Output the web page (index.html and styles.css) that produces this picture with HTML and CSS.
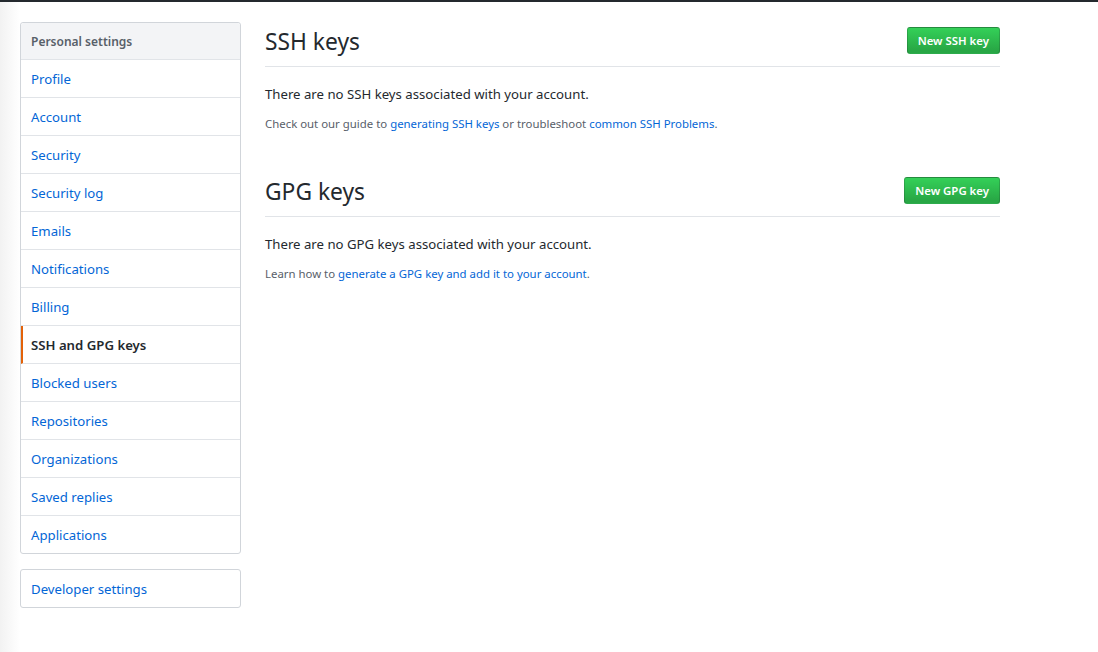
FILE: index.html
```html
<!DOCTYPE html>
<html>
<head>
<meta charset="utf-8">
<link rel="stylesheet" href="styles.css">
</head>
<body>
<div class="topbar"></div>
<div class="page">
  <aside class="sidebar">
    <nav class="menu">
      <div class="menu-heading">Personal settings</div>
      <a class="menu-item" href="#">Profile</a>
      <a class="menu-item" href="#">Account</a>
      <a class="menu-item" href="#">Security</a>
      <a class="menu-item" href="#">Security log</a>
      <a class="menu-item" href="#">Emails</a>
      <a class="menu-item" href="#">Notifications</a>
      <a class="menu-item" href="#">Billing</a>
      <a class="menu-item selected" href="#">SSH and GPG keys</a>
      <a class="menu-item" href="#">Blocked users</a>
      <a class="menu-item" href="#">Repositories</a>
      <a class="menu-item" href="#">Organizations</a>
      <a class="menu-item" href="#">Saved replies</a>
      <a class="menu-item" href="#">Applications</a>
    </nav>
    <nav class="menu">
      <a class="menu-item" href="#">Developer settings</a>
    </nav>
  </aside>
  <main class="content">
    <section class="section">
      <div class="subhead">
        <h2 class="subhead-heading">SSH keys</h2>
        <a class="btn" href="#">New SSH key</a>
      </div>
      <p class="blank">There are no SSH keys associated with your account.</p>
      <p class="note">Check out our guide to <a href="#">generating SSH keys</a> or troubleshoot <a href="#">common SSH Problems</a>.</p>
    </section>
    <section class="section spacious">
      <div class="subhead">
        <h2 class="subhead-heading">GPG keys</h2>
        <a class="btn" href="#">New GPG key</a>
      </div>
      <p class="blank">There are no GPG keys associated with your account.</p>
      <p class="note">Learn how to <a href="#">generate a GPG key and add it to your account</a>.</p>
    </section>
  </main>
</div>
</body>
</html>
```

FILE: styles.css
```css
html, body {
  margin: 0;
  padding: 0;
}
body {
  font-family: "Noto Sans", "Open Sans", "Liberation Sans", sans-serif;
  font-size: 13.2px;
  line-height: 1.5;
  color: #24292e;
  background: linear-gradient(to right, #f2f2f2 0px, #ffffff 20px);
  height: 652px;
  overflow: hidden;
}
a {
  color: #0366d6;
  text-decoration: none;
}
.topbar {
  height: 2px;
  background: #24292e;
}
.page {
  display: flex;
  padding: 20px 0 0 20px;
  gap: 24px;
}
.sidebar {
  width: 221px;
  flex-shrink: 0;
  display: flex;
  flex-direction: column;
  gap: 15px;
}
.menu {
  display: flex;
  flex-direction: column;
  background: #fff;
  border: 1px solid #d1d5da;
  border-radius: 3px;
}
.menu-heading {
  height: 36px;
  box-sizing: border-box;
  display: flex;
  align-items: center;
  padding: 2px 10px 0;
  font-size: 12px;
  font-weight: 600;
  color: #586069;
  background: #f3f4f6;
  border-bottom: 1px solid #e1e4e8;
  border-radius: 3px 3px 0 0;
  height: 37px;
}
.menu-item {
  height: 38px;
  box-sizing: border-box;
  display: flex;
  align-items: center;
  padding: 2px 10px 0;
  border-bottom: 1px solid #e1e4e8;
  color: #0366d6;
}
.menu-item:last-child {
  border-bottom: 0;
  height: 37px;
}
.menu-item.selected {
  color: #24292e;
  font-weight: 600;
  padding-left: 8px;
  border-left: 2px solid #e36209;
}
.content {
  width: 735px;
}
.section {
  display: flex;
  flex-direction: column;
}
.spacious {
  margin-top: 39px;
}
.subhead {
  display: flex;
  align-items: flex-start;
  justify-content: space-between;
  border-bottom: 1px solid #e1e4e8;
  padding-top: 3px;
  padding-bottom: 8px;
  margin-bottom: 17px;
}
.subhead-heading {
  margin: 0;
  font-size: 22.8px;
  font-weight: 400;
  line-height: 33px;
  color: #24292e;
}
.btn {
  display: inline-block;
  margin-top: 2px;
  padding: 0 10px;
  height: 25px;
  line-height: 25px;
  font-size: 11.4px;
  font-weight: 600;
  color: #fff;
  background: linear-gradient(-180deg, #34d058 0%, #28a745 90%);
  border: 1px solid rgba(27, 31, 35, 0.2);
  border-radius: 3px;
}
.blank {
  margin: 0 0 10px;
  line-height: 21px;
}
.note {
  margin: 0;
  font-size: 11.4px;
  line-height: 18px;
  color: #586069;
}
```
